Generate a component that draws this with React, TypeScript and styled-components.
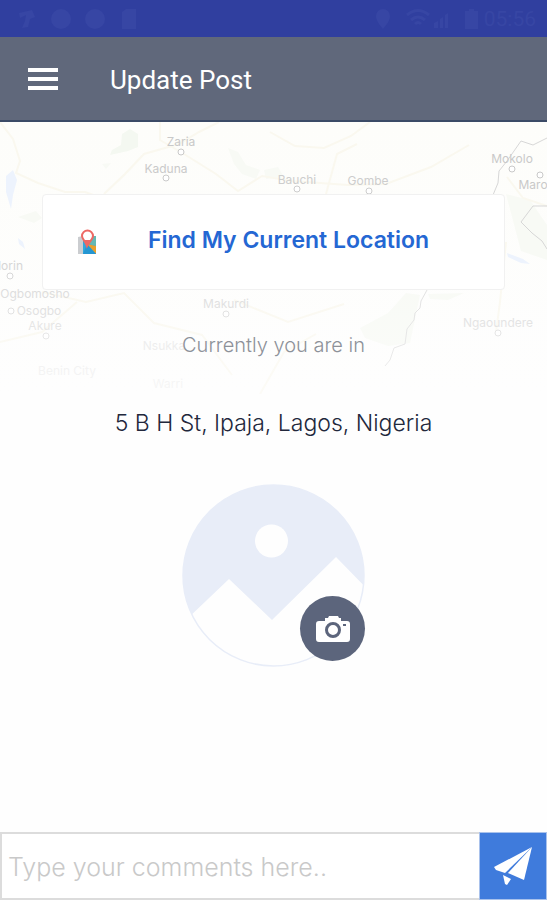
import React from "react";
import styled, { createGlobalStyle } from "styled-components";

const GlobalStyle = createGlobalStyle`
  *, *::before, *::after { box-sizing: border-box; }
  html, body { margin: 0; background: #fefefe; }
  body { font-family: Inter, "Liberation Sans", sans-serif; }
  button, input { font: inherit; }
  h1, p { margin: 0; }
`;

const Screen = styled.div`
  display: flex;
  flex-direction: column;
  min-height: 100vh;
`;

const StatusBar = styled.div`
  display: flex;
  align-items: center;
  justify-content: space-between;
  height: 37px;
  padding: 0 11px 0 18px;
  background: #303f9f;
  color: #3746a4;
`;

const StatusGroup = styled.div`
  display: flex;
  align-items: center;
  gap: 4px;
`;

const Clock = styled.time`
  font: 400 21px/24px Roboto, sans-serif;
`;

const Header = styled.header`
  display: flex;
  align-items: center;
  gap: 52px;
  height: 85px;
  padding: 0 28px;
  background: #60687b;
  border-bottom: 2px solid #3b4a66;
`;

const MenuButton = styled.button`
  display: flex;
  padding: 0;
  border: 0;
  background: none;
  color: #fff;
`;

const Title = styled.h1`
  padding-top: 2px;
  color: #fff;
  font: 400 26px/32px Roboto, sans-serif;
`;

const Main = styled.main`
  position: relative;
  display: flex;
  flex: 1;
  flex-direction: column;
  align-items: center;
  padding: 72px 42px 32px;
`;

const MapBackdrop = styled.svg`
  position: absolute;
  top: 0;
  left: 0;
  width: 100%;
  height: 272px;
`;

const LocationButton = styled.button`
  position: relative;
  display: grid;
  grid-template-columns: 20px 1fr;
  align-items: center;
  width: 100%;
  height: 96px;
  padding: 0 24px 0 34px;
  border: 1px solid #f1f1f1;
  border-radius: 4px;
  background: #fff;
  color: #2467d3;
  font-size: 23px;
  font-weight: 600;
  line-height: 28px;
`;

const LocationLabel = styled.span`
  padding-bottom: 4px;
`;

const Caption = styled.p`
  position: relative;
  margin-top: 41px;
  color: #8d9199;
  font-size: 20px;
  font-weight: 300;
  line-height: 28px;
`;

const Address = styled.p`
  margin-top: 48px;
  color: #22283c;
  font-size: 23px;
  font-weight: 300;
  line-height: 32px;
`;

const PhotoPicker = styled.div`
  position: relative;
  display: flex;
  margin-top: 45px;
`;

const CameraButton = styled.button`
  position: absolute;
  right: 0;
  bottom: 6px;
  display: grid;
  place-items: center;
  width: 65px;
  height: 65px;
  padding: 0;
  border: 0;
  border-radius: 50%;
  background: #5c657c;
`;

const CommentForm = styled.form`
  display: flex;
  height: 68px;
`;

const CommentInput = styled.input`
  flex: 1;
  min-width: 0;
  padding: 2px 6px 0;
  border: 2px solid #dcdcdc;
  border-right: 0;
  border-radius: 0;
  outline: 0;
  background: #fff;
  color: #22283c;
  font-size: 25px;
  font-weight: 300;
  &::placeholder { color: #c9c9c9; opacity: 1; }
`;

const SendButton = styled.button`
  display: grid;
  place-items: center;
  width: 68px;
  padding: 0;
  border: 1px solid #a9c2ec;
  background: #3f7bdc;
`;

const cities = [
  { name: "Zaria", x: 181, y: 24, dotX: 181, dotY: 30, tone: "#c9c9c9" },
  { name: "Kaduna", x: 166, y: 51, dotX: 166, dotY: 56, tone: "#cacaca" },
  { name: "Bauchi", x: 297, y: 62, dotX: 297, dotY: 67, tone: "#cdcdcd" },
  { name: "Gombe", x: 368, y: 63, dotX: 369, dotY: 69, tone: "#cdcdcd" },
  { name: "Mokolo", x: 512, y: 41, dotX: 512, dotY: 47, tone: "#c9c9c9" },
  { name: "Maroua", x: 540, y: 67, dotX: 540, dotY: 53, tone: "#c9c9c9" },
  { name: "Ilorin", x: 9, y: 148, dotX: 10, dotY: 154, tone: "#d5d5d5" },
  { name: "Ogbomosho", x: 35, y: 176, dotX: 0, dotY: -10, tone: "#d9d9d9" },
  { name: "Osogbo", x: 39, y: 193, dotX: 11, dotY: 189, tone: "#dadada" },
  { name: "Akure", x: 45, y: 208, dotX: 46, dotY: 214, tone: "#dedede" },
  { name: "Makurdi", x: 226, y: 186, dotX: 226, dotY: 192, tone: "#dbdbdb" },
  { name: "Nsukka", x: 164, y: 228, dotX: 0, dotY: -10, tone: "#e6e6e6" },
  { name: "Ngaoundere", x: 498, y: 205, dotX: 498, dotY: 211, tone: "#dcdcdc" },
  { name: "Benin City", x: 67, y: 253, dotX: 0, dotY: -10, tone: "#ececec" },
  { name: "Warri", x: 168, y: 266, dotX: 0, dotY: -10, tone: "#eeeeee" },
];

const NigeriaMap = () => (
  <MapBackdrop viewBox="0 0 547 272" preserveAspectRatio="xMidYMin slice" aria-hidden="true">
    <defs>
      <linearGradient id="land" x1="0" y1="0" x2="0" y2="1">
        <stop offset="0" stopColor="#fdfdfa" />
        <stop offset="1" stopColor="#fefefe" />
      </linearGradient>
      <linearGradient id="haze" x1="0" y1="0" x2="0" y2="1">
        <stop offset="0.5" stopColor="#fefefe" stopOpacity="0" />
        <stop offset="1" stopColor="#fefefe" stopOpacity="0.5" />
      </linearGradient>
    </defs>
    <rect width="547" height="272" fill="url(#land)" />
    <g fill="#f8faf5">
      <path d="M122 12l8-5 8 5v13l-10 4-18 4 2-5 9-5z" fill="#f4f8f1" />
      <path d="M228 26l10 4 8 13 14 5-4 9-14-5-8-10z" />
      <path d="M102 42l9-1-5 6zM264 48l14-3 6 10-18 2z" />
      <path d="M18 95l18-6 6 7-8 5zM360 206l28-15 18-20 14 2-10 48-22 3-23-8z" />
      <path d="M506 72l24 6 17 25v35l-26-9zM428 172l36-1-16 7-18-1z" />
    </g>
    <g fill="#edf3fd">
      <path d="M6 54l7-6 4 10-4 15-2 14-5-17z" />
      <path d="M507 131l16 6 7 5-9-1-13-6zM18 116l5 4 2 7-6-5z" />
    </g>
    <g fill="none" stroke="#faf8ef" strokeWidth="2">
      <path d="M0 0l13 17 7 22-4 12 22 10 27 9 20 0 17 6" />
      <path d="M104 72l21-20 19-20 35-10 20-12 20-10" />
      <path d="M160 0v18l24 14 32 20 22 17 24-15 30 5 56 4 38-1 45-17 38-22" />
      <path d="M270 10l25 14 29 2 27-12 19-14M326 72l11-40 20-10" />
      <path d="M42 170l44 10 38-9 30 30 48 12 30 40M0 220l42-10 35-30" />
      <path d="M234 178l54 22 56-18M260 272l24-42 32-18" />
      <path d="M506 120l-6 60-4 30M507 55l16 21 24 8" />
    </g>
    <g fill="none" stroke="#d7d7d7" strokeWidth="1">
      <path d="M547 16l-14 7-12-4-14 20-8 10-1 12-5 12" />
      <path d="M547 84h-14l-12 16 11 11 10 8 5 8" />
      <path d="M427 168l-6 11-1 7-5 5-1 7-7 9-2 15-11 4-4 12-5 6" stroke="#dedede" />
    </g>
    <g fontFamily="Inter, sans-serif" fontSize="12" textAnchor="middle">
      {cities.map((c) => (
        <g key={c.name}>
          <text x={c.x} y={c.y} fill={c.tone}>{c.name}</text>
          <circle cx={c.dotX} cy={c.dotY} r="3" fill="#fff" stroke={c.tone} />
        </g>
      ))}
    </g>
    <rect width="547" height="272" fill="url(#haze)" />
  </MapBackdrop>
);

const NotificationIcons = () => (
  <svg width="120" height="22" viewBox="0 0 120 22" fill="currentColor" aria-hidden="true">
    <path d="M1 5l13-3 3 7-5 2-2 8-6 1 3-7 1-6-6 3z" />
    <circle cx="43" cy="11" r="10" />
    <circle cx="77" cy="11" r="10" />
    <path d="M104 4l4-3h10v20h-14z" />
  </svg>
);

const SignalIcons = () => (
  <svg width="104" height="22" viewBox="0 0 104 22" fill="currentColor" aria-hidden="true">
    <path d="M7 1a7 7 0 0 1 7 7c0 5-4 9-7 13C4 17 0 13 0 8a7 7 0 0 1 7-7z" />
    <path d="M31 7q11-9 22 0M35 12q7-6 14 0M39 16q3-3 6 0" fill="none" stroke="currentColor" strokeWidth="3" />
    <path d="M58 20v-5l4-2v7zM64 20v-9l3-2v11zM69 20V7l3-2v15z" />
    <path d="M89 3h4V1h5v2h4v18H89z" />
  </svg>
);

const MapPinIcon = () => (
  <svg width="20" height="26" viewBox="0 0 20 26" aria-hidden="true">
    <path d="M1 8l5-1v18H1z" fill="#cbcdd0" />
    <path d="M6 7h13v18H6z" fill="#32a7dc" />
    <path d="M11 7h8v10l-8-2z" fill="#63b8b4" />
    <path d="M10 15l9 2v8z" fill="#e8a02c" />
    <path d="M6 25l4-10 9 10z" fill="#2496d2" />
    <path d="M10 17C9 13 5 10 5 7a5 5 0 0 1 11 0c0 3-4 6-6 10z" fill="#fff" stroke="#ed6864" strokeWidth="2" />
    <path d="M7 11h7l-4 6z" fill="#ed6864" />
  </svg>
);

const PhotoPlaceholder = () => (
  <svg width="183" height="183" viewBox="0 0 183 183" role="img" aria-label="No photo selected">
    <defs>
      <clipPath id="photo"><circle cx="91.5" cy="91.5" r="91" /></clipPath>
    </defs>
    <circle cx="91.5" cy="91.5" r="90.5" fill="#e8edf8" />
    <g clipPath="url(#photo)" fill="#fefefe">
      <path d="M4 136l43-41 43 41 64-63 37 38v80H4z" />
      <circle cx="89.5" cy="57" r="16.5" />
    </g>
    <circle cx="91.5" cy="91.5" r="90.5" fill="none" stroke="#e8edf8" strokeWidth="1.500" />
  </svg>
);

const CameraIcon = () => (
  <svg width="34" height="28" viewBox="0 0 34 28" aria-hidden="true">
    <path d="M3 6h6V3h3l1-2h9l1 2h2v3h6q3 0 3 3v15q0 3-3 3H3q-3 0-3-3V9q0-3 3-3z" fill="#fff" />
    <circle cx="17" cy="15" r="6.500" fill="#fff" stroke="#5c657c" strokeWidth="3" />
    <path d="M27 9h3v2h-3z" fill="#5c657c" />
  </svg>
);

const SendIcon = () => (
  <svg width="40" height="38" viewBox="0 0 40 38" fill="#fff" aria-hidden="true">
    <path d="M39 0L1 20l2 3 9 3z" />
    <path d="M39 0L15 26l16 7z" />
    <path d="M10 28l8 4-4 6-2-1z" />
  </svg>
);

export default function App() {
  return (
    <Screen>
      <GlobalStyle />
      <StatusBar>
        <NotificationIcons />
        <StatusGroup>
          <SignalIcons />
          <Clock>05:56</Clock>
        </StatusGroup>
      </StatusBar>
      <Header>
        <MenuButton type="button" aria-label="Open menu">
          <svg width="30" height="22" viewBox="0 0 30 22" fill="currentColor">
            <path d="M0 0h30v4H0zM0 9h30v4H0zM0 18h30v4H0z" />
          </svg>
        </MenuButton>
        <Title>Update Post</Title>
      </Header>
      <Main>
        <NigeriaMap />
        <LocationButton type="button">
          <MapPinIcon />
          <LocationLabel>Find My Current Location</LocationLabel>
        </LocationButton>
        <Caption>Currently you are in</Caption>
        <Address>5 B H St, Ipaja, Lagos, Nigeria</Address>
        <PhotoPicker>
          <PhotoPlaceholder />
          <CameraButton type="button" aria-label="Add photo"><CameraIcon /></CameraButton>
        </PhotoPicker>
      </Main>
      <CommentForm onSubmit={(e: React.FormEvent) => e.preventDefault()}>
        <CommentInput type="text" aria-label="Comment" placeholder="Type your comments here.." />
        <SendButton type="submit" aria-label="Send"><SendIcon /></SendButton>
      </CommentForm>
    </Screen>
  );
}
